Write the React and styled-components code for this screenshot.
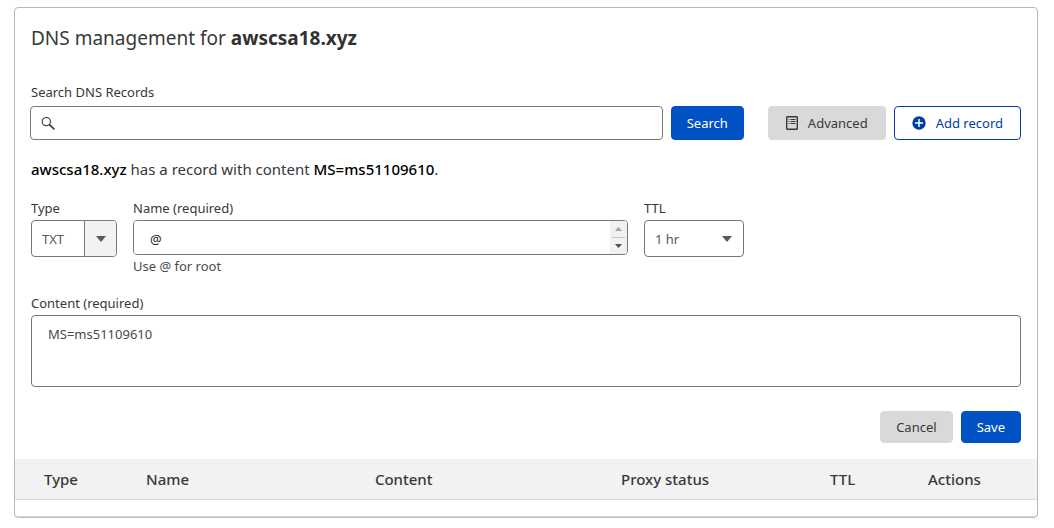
import React from "react";
import styled, { createGlobalStyle, css } from "styled-components";

const GlobalStyle = createGlobalStyle`
  *, *::before, *::after { box-sizing: border-box; }
  body {
    margin: 0;
    background: #fff;
    color: #36393a;
    font-family: "Noto Sans", "Open Sans", sans-serif;
    font-size: 13px;
    line-height: 20px;
  }
  button, input, select, textarea { font: inherit; margin: 0; }
`;

const Card = styled.main`
  margin: 7px 16px 10px 14px;
  border: 1px solid #b9b9b9;
  border-radius: 4px;
  box-shadow: inset 0 -1px 0 #d9d9d9;
  overflow: hidden;
`;

const Panel = styled.div`
  padding: 15px 16px 0;
`;

const Title = styled.h1`
  margin: 0 0 29px;
  font-size: 19px;
  line-height: 30px;
  font-weight: 400;

  strong { font-weight: 700; color: #313131; }
`;

const Label = styled.label`
  display: block;
  height: 20px;
  margin-bottom: ${({ $gap = 2 }) => $gap}px;
`;

const SearchRow = styled.form`
  display: flex;
  align-items: center;
  gap: 8px;
`;

const SearchBox = styled.div`
  display: flex;
  flex: 1;
  align-items: center;
  gap: 8px;
  height: 34px;
  margin-left: -1px;
  padding: 0 10px;
  border: 1px solid #77787a;
  border-radius: 4px;

  input {
    flex: 1;
    min-width: 0;
    border: 0;
    outline: 0;
    background: none;
  }
`;

const variants = {
  primary: css`
    background: #0051c3;
    border-color: #0051c3;
    color: #fff;
  `,
  neutral: css`
    background: #d9d9d9;
    border-color: #d9d9d9;
    color: #36393a;
  `,
  outline: css`
    background: #fff;
    border-color: #003ea3;
    color: #003ea3;
  `,
};

const Button = styled.button`
  display: inline-flex;
  align-items: center;
  justify-content: center;
  gap: ${({ $gap = 8 }) => $gap}px;
  height: ${({ $tall }) => ($tall ? 34 : 32)}px;
  padding: 0 ${({ $pad = 15 }) => $pad}px;
  border: 1px solid;
  border-radius: 4px;
  white-space: nowrap;
  ${({ $variant }) => variants[$variant]}
`;

const Actions = styled.div`
  display: flex;
  gap: 8px;
  justify-content: flex-end;
  padding-left: ${({ $inset = 0 }) => $inset}px;
`;

const Message = styled.p`
  margin: 18px 0;
  font-size: 15px;
  line-height: 22px;

  strong { font-weight: 500; color: #000; }
`;

const Fields = styled.div`
  display: flex;
  align-items: flex-start;
  gap: 16px;
  margin-bottom: 17px;
`;

const Field = styled.div`
  width: ${({ $width }) => $width};
`;

const SelectWrap = styled.div`
  display: grid;
  grid-template-columns: 1fr 32px;
  height: 37px;
  border: 1px solid #77787a;
  border-radius: 4px;
  overflow: hidden;

  select {
    grid-area: 1 / 1 / 2 / 3;
    padding: 0 10px;
    border: 0;
    outline: 0;
    appearance: none;
    background: none;
    color: #595959;
  }
`;

const Caret = styled.span`
  grid-area: 1 / 2;
  display: grid;
  place-items: center;
  pointer-events: none;
  ${({ $boxed }) =>
    $boxed &&
    css`
      background: #f2f2f2;
      border-left: 1px solid #77787a;
    `}
`;

const NameBox = styled.div`
  display: flex;
  height: 35px;
  border: 1px solid #77787a;
  border-radius: 4px;
  overflow: hidden;

  input {
    flex: 1;
    min-width: 0;
    padding: 2px 16px 0;
    border: 0;
    outline: 0;
    color: #222;
  }
`;

const Stepper = styled.div`
  display: flex;
  flex-direction: column;
  width: 17px;
  background: #f1f1f1;

  button {
    display: grid;
    flex: 1;
    place-items: center;
    margin: 0 2px;
    padding: 0;
    border: 0;
    background: none;
  }
  button + button { border-top: 1px solid #c4c4c4; }
`;

const Hint = styled.p`
  margin: 1px 0 0;
  color: #4a4a4a;
`;

const ContentArea = styled.textarea`
  display: block;
  width: 100%;
  height: 72px;
  padding: 8px 16px;
  border: 1px solid #77787a;
  border-radius: 4px;
  outline: 0;
  resize: none;
  color: #4a4a4a;
`;

const Footer = styled.div`
  padding: 24px 0 16px;
`;

const Table = styled.table`
  width: 100%;
  border-collapse: collapse;
  table-layout: fixed;
  margin-bottom: 17px;

  th {
    height: 40px;
    padding: 0 0 0 29px;
    background: #f2f2f2;
    border-bottom: 1px solid #d9d9d9;
    font-size: 15px;
    font-weight: 500;
    text-align: left;
    white-space: nowrap;
  }
`;

const Column = styled.col`
  width: ${({ $width }) => $width};
`;

const Triangle = ({ width = 10, height = 6, up = false, color = "#595959" }) => (
  <svg width={width} height={height} viewBox="0 0 10 6" preserveAspectRatio="none" aria-hidden="true">
    <path d={up ? "M0 6h10L5 0z" : "M0 0h10L5 6z"} fill={color} />
  </svg>
);

const SearchIcon = () => (
  <svg width="15" height="15" viewBox="0 0 15 15" fill="none" stroke="#36393a" aria-hidden="true">
    <circle cx="5.3" cy="5.6" r="4.1" strokeWidth="1.1" />
    <path d="M8.4 8.7l5 4.7" strokeWidth="1.6" />
  </svg>
);

const ListIcon = () => (
  <svg width="12" height="14" viewBox="0 0 12 14" fill="none" stroke="#36393a" aria-hidden="true">
    <rect x=".7" y=".7" width="10.6" height="12.6" rx=".6" strokeWidth="1.4" />
    <path d="M2.5 3.5h1M4.5 3.5h5M2.5 5.5h1M4.5 5.5h5M2.5 7.5h1M4.5 7.5h5" />
  </svg>
);

const PlusIcon = () => (
  <svg width="14" height="14" viewBox="0 0 14 14" aria-hidden="true">
    <circle cx="7" cy="7" r="6.7" fill="#003ea3" />
    <path d="M7 3v8M3 7h8" stroke="#fff" strokeWidth="1.5" />
  </svg>
);

const columns = [
  ["Type", "102px"],
  ["Name", "22.4%"],
  ["Content", "auto"],
  ["Proxy status", "209px"],
  ["TTL", "98px"],
  ["Actions", "138px"],
];

export default function App() {
  return (
    <>
      <GlobalStyle />
      <Card>
        <Panel>
          <Title>
            DNS management for <strong>awscsa18.xyz</strong>
          </Title>
          <Label htmlFor="search" $gap={4}>Search DNS Records</Label>
          <SearchRow onSubmit={(e) => e.preventDefault()}>
            <SearchBox>
              <SearchIcon />
              <input id="search" type="text" />
            </SearchBox>
            <Button $variant="primary" $tall type="submit">Search</Button>
            <Actions $inset={16}>
              <Button $variant="neutral" $tall $gap={10} $pad={17} type="button">
                <ListIcon />
                Advanced
              </Button>
              <Button $variant="outline" $tall $gap={10} $pad={17} type="button">
                <PlusIcon />
                Add record
              </Button>
            </Actions>
          </SearchRow>
          <Message>
            <strong>awscsa18.xyz</strong> has a record with content <strong>MS=ms51109610</strong>.
          </Message>
          <Fields>
            <Field $width="86px">
              <Label htmlFor="type">Type</Label>
              <SelectWrap>
                <Caret $boxed><Triangle /></Caret>
                <select id="type" defaultValue="TXT"><option>TXT</option></select>
              </SelectWrap>
            </Field>
            <Field $width="50%">
              <Label htmlFor="name">Name (required)</Label>
              <NameBox>
                <input id="name" type="text" defaultValue="@" />
                <Stepper>
                  <button type="button" aria-label="Previous line"><Triangle width={7} height={4} up color="#a3a3a3" /></button>
                  <button type="button" aria-label="Next line"><Triangle width={7} height={4} color="#505050" /></button>
                </Stepper>
              </NameBox>
              <Hint>Use @ for root</Hint>
            </Field>
            <Field $width="100px">
              <Label htmlFor="ttl">TTL</Label>
              <SelectWrap>
                <Caret><Triangle /></Caret>
                <select id="ttl" defaultValue="1 hr"><option>1 hr</option></select>
              </SelectWrap>
            </Field>
          </Fields>
          <Label htmlFor="content">Content (required)</Label>
          <ContentArea id="content" defaultValue="MS=ms51109610" />
          <Footer>
            <Actions>
              <Button $variant="neutral" type="button">Cancel</Button>
              <Button $variant="primary" type="button">Save</Button>
            </Actions>
          </Footer>
        </Panel>
        <Table>
          <colgroup>
            {columns.map(([name, width]) => <Column key={name} $width={width} />)}
          </colgroup>
          <thead>
            <tr>
              {columns.map(([name]) => <th key={name} scope="col">{name}</th>)}
            </tr>
          </thead>
        </Table>
      </Card>
    </>
  );
}
